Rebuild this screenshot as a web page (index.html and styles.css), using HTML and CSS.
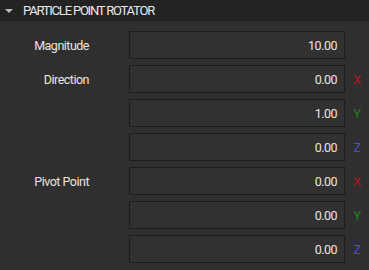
FILE: index.html
```html
<!DOCTYPE html>
<html lang="en">
<head>
    <meta charset="UTF-8">
    <title>Particle Point Rotator</title>
    <link rel="stylesheet" href="styles.css">
</head>
<body>
    <div class="panel">
        <div class="panel-header">
            <span class="caret"></span>
            <span class="title">PARTICLE POINT ROTATOR</span>
        </div>
        <div class="panel-body">
            <div class="row">
                <div class="label">Magnitude</div>
                <div class="field">10.00</div>
                <div class="axis"></div>
            </div>
            <div class="row">
                <div class="label">Direction</div>
                <div class="field">0.00</div>
                <div class="axis x">X</div>
            </div>
            <div class="row">
                <div class="label"></div>
                <div class="field">1.00</div>
                <div class="axis y">Y</div>
            </div>
            <div class="row">
                <div class="label"></div>
                <div class="field">0.00</div>
                <div class="axis z">Z</div>
            </div>
            <div class="row">
                <div class="label">Pivot Point</div>
                <div class="field">0.00</div>
                <div class="axis x">X</div>
            </div>
            <div class="row">
                <div class="label"></div>
                <div class="field">0.00</div>
                <div class="axis y">Y</div>
            </div>
            <div class="row">
                <div class="label"></div>
                <div class="field">0.00</div>
                <div class="axis z">Z</div>
            </div>
        </div>
    </div>
</body>
</html>
```

FILE: styles.css
```css
/* styles.css */

body {
    margin: 0;
    background-color: #2f2f2f;
    font-family: Roboto, 'Liberation Sans', sans-serif;
    font-size: 12.5px;
    letter-spacing: -0.5px;
    color: #e6e6e6;
}

.panel {
    width: 369px;
    height: 270px;
    background-color: #2f2f2f;
}

.panel-header {
    height: 21px;
    background-color: #232323;
    display: flex;
    align-items: center;
}

.caret {
    width: 0;
    height: 0;
    margin-left: 5px;
    margin-right: 10px;
    border-left: 4px solid transparent;
    border-right: 4px solid transparent;
    border-top: 4px solid #bbbbbb;
}

.title {
    font-size: 13px;
    letter-spacing: -1.2px;
    color: #e8e8e8;
}

.panel-body {
    padding-top: 10px;
    display: flex;
    flex-direction: column;
    gap: 6px;
}

.row {
    display: flex;
    align-items: center;
    height: 28px;
}

.label {
    width: 89px;
    text-align: right;
}

.field {
    box-sizing: border-box;
    margin-left: 40px;
    width: 216px;
    height: 28px;
    border: 1px solid #1c1c1c;
    background-color: #313131;
    display: flex;
    align-items: center;
    justify-content: flex-end;
    padding-right: 7px;
}

.axis {
    width: 24px;
    text-align: center;
}

.axis.x {
    color: #b3161b;
}

.axis.y {
    color: #1d8a1d;
}

.axis.z {
    color: #4e4ec2;
}
```
